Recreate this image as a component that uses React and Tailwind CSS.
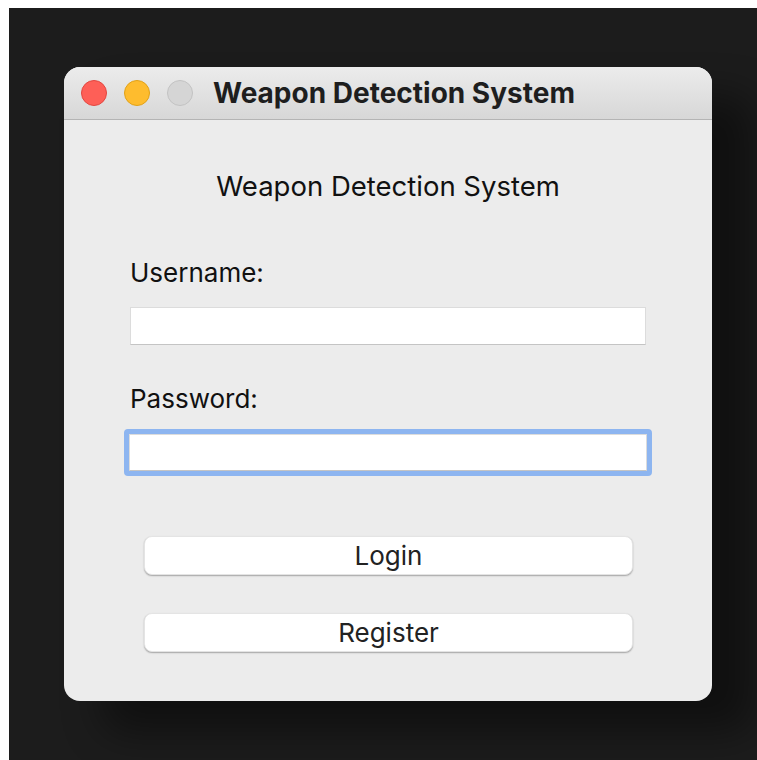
import React from "react";

const font = { fontFamily: "Inter, 'Liberation Sans', sans-serif" };

const TrafficLight = ({ color, ring }) => (
    <span className={`block w-[26px] h-[26px] rounded-full border ${color} ${ring}`} />
);

const Field = ({ label, focused, type = "text" }) => (
    <div className="flex flex-col">
        <label className="text-[26px] leading-[32px] text-[#111]">{label}</label>
        <div
            className={
                focused
                    ? "mt-[14px] -mx-[6px] rounded-[4px] border-[5px] border-[#8db5f0]"
                    : "mt-[18px]"
            }
        >
            <input
                type={type}
                className={`block w-full ${focused ? "h-[37px]" : "h-[38px]"} bg-white border border-[#dcdcdc] border-b-[#c4c4c4] outline-none px-2`}
            />
        </div>
    </div>
);

const Button = ({ children }) => (
    <button className="h-[39px] w-full rounded-[8px] bg-white text-[26px] leading-[32px] text-[#222] shadow-[0_1px_1.5px_rgba(0,0,0,0.3)] border border-[#e4e4e4]">
        {children}
    </button>
);

export default function App() {
    return (
        <div className="w-[757px] h-[760px] bg-white pt-[8px] pl-[9px]" style={font}>
            <div className="w-full h-full bg-[#1c1c1c] pl-[55px] pt-[59px]">
                <div className="w-[648px] h-[634px] rounded-[16px] bg-[#ececec] overflow-hidden shadow-[40px_30px_40px_rgba(0,0,0,0.45)] flex flex-col">
                    {/* title bar */}
                    <div className="h-[53px] shrink-0 flex items-center pl-[17px] bg-gradient-to-b from-[#ececec] to-[#d7d7d7] border-b border-[#b4b4b4]">
                        <div className="flex items-center gap-[17px]">
                            <TrafficLight color="bg-[#fe5f57]" ring="border-[#e2463f]" />
                            <TrafficLight color="bg-[#febc2e]" ring="border-[#e1a116]" />
                            <TrafficLight color="bg-[#d5d5d5]" ring="border-[#c2c2c2]" />
                        </div>
                        <h1 className="ml-[20px] text-[28px] leading-[32px] font-bold text-[#1e1e1e]">
                            Weapon Detection System
                        </h1>
                    </div>

                    {/* form */}
                    <div className="flex-1 flex flex-col px-[66px] pt-[50px]">
                        <h2 className="text-center text-[27.5px] leading-[32px] text-[#111]">Weapon Detection System</h2>

                        <div className="mt-[55px]">
                            <Field label="Username:" />
                        </div>
                        <div className="mt-[38px]">
                            <Field label="Password:" type="password" focused />
                        </div>

                        <div className="mt-[60px] pl-[14px] pr-[13px] flex flex-col gap-[38px]">
                            <Button>Login</Button>
                            <Button>Register</Button>
                        </div>
                    </div>
                </div>
            </div>
        </div>
    );
}
